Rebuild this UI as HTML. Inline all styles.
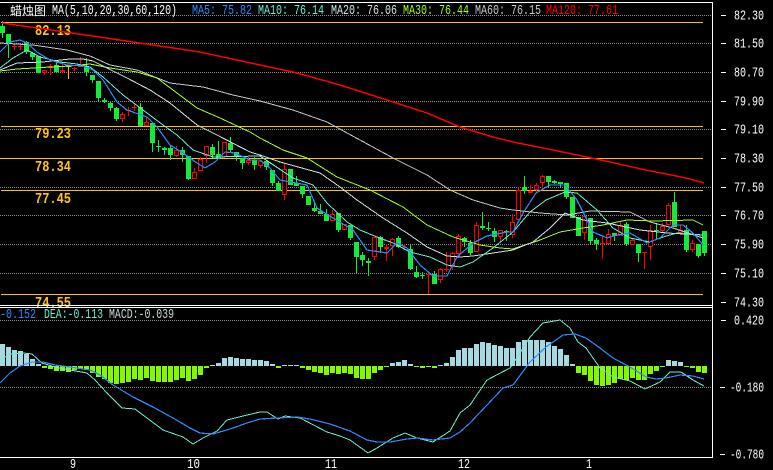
<!DOCTYPE html>
<html>
<head>
<meta charset="utf-8">
<style>
html,body{margin:0;padding:0;background:#000;width:773px;height:470px;overflow:hidden}
svg{display:block}
text{font-family:"Liberation Mono","Noto Sans CJK SC",monospace;font-size:13.5px}
.g{font-weight:bold;font-size:15px;fill:#ffc41e}
.w{fill:#fff}
</style>
</head>
<body>
<svg width="773" height="470" viewBox="0 0 773 470" xmlns="http://www.w3.org/2000/svg" shape-rendering="crispEdges">
<rect width="773" height="470" fill="#000"/>
<g stroke="#8c8c8c" stroke-dasharray="1 1" fill="none">
<path d="M0 15.5H712M0 43.5H712M0 72.5H712M0 101.5H712M0 129.5H712M0 187.5H712M0 215.5H712M0 244.5H712M0 273.5H712M0 320.5H712M0 387.5H712"/>
</g>
<path d="M1 22.5H703M1 126.5H703M0 158.5H703M1 190.5H703M1 294.5H703" stroke="#ffc000" fill="none"/>
<text class="g" x="35" y="35" textLength="36" lengthAdjust="spacingAndGlyphs">82.13</text>
<text class="g" x="35" y="138" textLength="36" lengthAdjust="spacingAndGlyphs">79.23</text>
<text class="g" x="35" y="171" textLength="36" lengthAdjust="spacingAndGlyphs">78.34</text>
<text class="g" x="35" y="203" textLength="36" lengthAdjust="spacingAndGlyphs">77.45</text>
<text class="g" x="35" y="307" textLength="36" lengthAdjust="spacingAndGlyphs">74.55</text>

<g transform="translate(.5 0)" fill="none">
<!-- green wicks -->
<path stroke="#14ea3c" d="M2 21V38M8 34V58M26 41V54M32 52V60M38 56V73M56 61V73M86 58V76M92 75V83M98 81V102M104 98V103M110 102V111M116 107V121M140 103V126M152 123V152M158 140V152M164 147V155M170 146V160M182 147V162M188 156V180M212 144V158M218 141V158M230 137V153M236 152V161M242 158V169M254 157V170M266 161V170M272 170V186M278 181V191M290 169V185M296 176V186M302 186V198M308 196V205M314 201V212M320 204V214M326 209V221M338 213V232M350 225V240M356 242V273M362 252V266M368 258V276M380 236V253M398 236V248M410 244V270M416 266V278M422 272V279M434 271V284M464 237V247M470 240V255M482 212V230M488 222V231M494 228V242M506 230V241M524 176V194M548 176V188M554 180V184M560 182V188M566 183V199M572 197V218M578 217V236M590 218V244M596 238V250M614 233V241M626 222V246M638 244V262M656 224V240M674 192V227M686 225V252M698 244V258M704 231V256"/>
<!-- green bodies -->
<path stroke="#14ea3c" stroke-width="5" d="M2 26V33M8 34V44M26 42V52M32 53V57M38 56V73M56 65V72M86 67V72M92 75V80M98 81V98M104 100V102M110 103V108M116 108V119M140 107V126M152 123V143M158 146V147M164 148V150M170 148V155M182 150V155M188 156V179M212 147V155M218 154V158M230 143V150M236 152V157M242 158V163M254 160V165M266 161V167M272 170V183M278 183V191M290 169V185M296 183V186M302 186V194M308 196V205M314 208V211M320 211V214M326 214V221M338 213V230M350 225V238M356 242V257M362 255V260M368 261V263M380 237V247M398 238V247M410 249V269M416 272V277M422 275V276M434 274V284M464 238V242M470 243V253M482 226V228M488 228V229M494 231V237M506 231V232M524 187V191M548 176V182M554 181V183M560 182V184M566 183V197M572 197V218M578 217V236M590 218V241M596 240V244M614 233V236M626 224V244M638 244V253M656 230V231M674 202V227M686 230V250M698 244V256M704 231V253"/>
<!-- red wicks -->
<path stroke="#ff0000" d="M14 44V50M20 44V50M44 70V75M50 64V75M62 63V73M74 67V71M80 57V67M122 112V122M128 107V116M134 104V111M146 117V126M176 146V157M194 168V179M200 157V171M206 146V163M224 142V158M248 157V165M260 160V168M284 163V200M332 210V221M344 224V230M374 237V260M386 244V261M392 238V256M404 244V250M428 272V294M440 268V283M446 252V272M452 252V270M458 234V256M476 222V252M500 230V242M512 214V238M518 187V220M530 185V193M536 183V193M542 175V189M584 216V240M602 235V259M608 229V244M620 222V236M632 238V245M644 252V269M650 225V260M662 223V233M668 203V225M680 225V235M692 240V252"/>
<!-- red bodies -->
<path stroke="#ff0000" stroke-width="5" d="M14 46V47M20 46V47M44 70V73M50 66V68M62 70V72M74 68V69M80 66V67M122 114V119M128 110V111M134 107V108M146 122V126M176 150V156M194 172V179M200 159V171M206 146V156M224 142V157M248 160V163M260 161V166M284 169V195M332 214V221M344 224V230M374 237V257M386 247V249M392 239V246M404 247V248M428 274V275M440 269V280M446 269V270M452 253V267M458 236V254M476 225V252M500 230V237M512 222V235M518 190V220M530 191V193M536 185V190M542 176V183M584 216V233M602 243V244M608 234V244M620 225V236M632 240V245M644 252V253M650 230V247M662 226V231M668 205V225M680 230V233M692 243V250"/>
<!-- hollow interiors -->
<path stroke="#000" stroke-width="3" d="M44 71V72M122 115V118M146 123V125M176 151V155M194 173V178M200 160V170M206 147V155M224 143V156M248 161V162M260 162V165M284 170V194M332 215V220M344 225V229M374 238V256M392 240V245M440 270V279M452 254V266M458 237V253M476 226V251M500 231V236M512 223V234M518 191V219M536 186V189M542 177V182M584 217V232M608 235V243M620 226V235M632 241V244M650 231V246M662 227V230M668 206V224M680 231V232M692 244V249"/>
<path stroke="#ffc000" d="M68 66V79"/>
<path stroke="#ffc000" stroke-width="5" d="M68 66V67"/>
</g>

<g fill="none">
<polyline stroke="#ff0000" stroke-width="1.5" points="2,23 72,33 133,42 200,52 260,65 293,72 340,85 387,100 427,113 460,127 493,137 513,142 553,150 596,159 646,170 686,178 704,183"/>
<polyline stroke="#c8c8c8" points="0,43 33,45 67,50 90,56 110,65 137,70 170,83 203,87 233,95 260,101 293,110 327,122 360,140 393,158 427,175 450,190 473,200 500,208 513,210 540,213 567,215 590,211 630,212 650,222 673,228 703,238"/>
<polyline stroke="#a0ff20" points="0,71 17,69 50,67 70,66 90,64 110,68 137,72 157,78 177,93 197,108 220,118 250,132 260,138 283,150 307,158 337,177 370,190 403,207 427,225 453,237 480,245 500,248 513,249 540,240 560,232 583,228 603,225 627,220 653,221 693,220 703,225"/>
<polyline stroke="#d0e4e4" points="0,70 17,63 43,62 70,59 83,59 93,61 107,68 127,78 150,90 170,103 197,125 217,135 250,152 260,155 280,162 320,173 340,187 357,200 383,218 407,233 427,247 447,256 460,257 473,256 493,253 513,250 533,242 550,228 565,213 583,220 607,223 640,230 667,233 703,235"/>
<polyline stroke="#66f0d8" points="0,68 13,58 27,50 40,57 60,62 77,64 90,67 103,77 123,95 143,110 163,125 177,135 193,150 213,157 260,156 293,178 313,185 327,203 347,222 360,230 377,237 393,243 410,252 430,257 447,265 460,267 473,262 493,248 513,232 530,212 546,200 565,192 577,193 597,210 613,228 630,238 650,242 663,237 677,233 703,235"/>
<polyline stroke="#2a8cff" stroke-width="1.2" points="0,52 10,42 20,40 27,43 37,52 50,60 67,65 83,66 93,70 103,80 117,102 127,110 147,117 157,127 170,145 183,153 197,163 205,168 215,162 225,152 235,153 250,160 260,160 270,168 280,180 307,185 317,208 333,218 353,230 367,250 387,253 397,243 407,248 420,265 433,276 447,276 457,257 473,243 487,236 507,232 513,232 523,213 536,193 550,185 565,185 577,200 587,220 593,232 607,238 617,235 630,233 647,243 660,238 673,225 683,225 693,233 703,245"/>
</g>

<!-- MACD histogram -->
<g transform="translate(.5 0)" fill="none" stroke-width="5">
<path stroke="#a8d8e0" d="M2 366V344M8 366V347M14 366V350M20 366V351M26 366V354M32 366V359M38 366V364M212 366V365M218 366V363M224 366V358M230 366V357M236 366V358M242 366V359M248 366V359M254 366V360M260 366V360M266 366V361M272 366V364M284 366V365M290 366V365M296 366V365M392 366V363M398 366V362M404 366V360M410 366V364M440 366V365M446 366V363M452 366V357M458 366V350M464 366V348M470 366V348M476 366V344M482 366V342M488 366V343M494 366V345M500 366V346M506 366V348M512 366V348M518 366V342M524 366V340M530 366V340M536 366V340M542 366V340M548 366V342M554 366V346M560 366V349M566 366V355M572 366V364M668 366V360M674 366V361M680 366V362"/>
<path stroke="#84f800" d="M44 366V368M50 366V369M56 366V371M62 366V371M68 366V372M74 366V370M80 366V369M86 366V370M92 366V373M98 366V377M104 366V379M110 366V383M116 366V384M122 366V383M128 366V382M134 366V379M140 366V380M146 366V378M152 366V381M158 366V382M164 366V382M170 366V382M176 366V380M182 366V378M188 366V381M194 366V379M200 366V375M206 366V368M278 366V368M302 366V368M308 366V370M314 366V372M320 366V373M326 366V375M332 366V373M338 366V374M344 366V373M350 366V374M356 366V378M362 366V379M368 366V379M374 366V373M380 366V370M386 366V367M416 366V367M422 366V368M428 366V367M434 366V368M578 366V373M584 366V375M590 366V381M596 366V385M602 366V386M608 366V385M614 366V383M620 366V379M626 366V380M632 366V378M638 366V380M644 366V380M650 366V374M656 366V371M662 366V367M686 366V367M692 366V368M698 366V372M704 366V373"/>
</g>
<g fill="none">
<polyline stroke="#66f0d0" points="0,360 10,354 23,353 32,354 42,363 55,367 70,370 87,373 95,380 107,393 122,408 135,409 147,418 163,430 183,437 193,444 203,438 217,431 227,420 243,416 260,412 267,412 278,419 285,416 300,418 327,432 340,436 350,440 368,453 377,448 393,438 405,433 417,438 433,442 450,431 460,413 470,405 487,380 510,368 520,353 530,337 543,323 560,320 570,328 578,342 586,348 600,368 613,377 630,381 645,389 660,382 670,372 681,372 693,380 704,386"/>
<polyline stroke="#2a8cff" stroke-width="1.2" points="0,383 10,373 20,366 32,362 43,362 55,365 70,367 90,370 100,375 113,385 133,397 153,407 173,418 190,428 200,433 213,434 230,429 247,423 260,419 277,418 297,417 310,419 330,424 350,431 367,440 377,442 390,442 407,439 417,438 433,440 450,438 460,432 470,423 487,405 503,388 513,385 530,362 546,347 563,335 575,334 586,338 600,348 613,358 630,367 646,377 656,379 666,378 680,375 693,376 704,379"/>
</g>

<!-- frame -->
<path d="M0 2.5H713M0 305.5H713M0 307.5H713M0 457.5H713M712.5 2V458" stroke="#fff" fill="none"/>

<!-- header -->
<text x="10" y="15" fill="#fff" style="font-family:'WenQuanYi Zen Hei','Noto Sans CJK SC',sans-serif;font-size:12px">蜡烛图</text>
<text x="52" y="14" fill="#fff" textLength="125" lengthAdjust="spacingAndGlyphs">MA(5,10,20,30,60,120)</text>
<text x="192" y="14" fill="#2a8cff" textLength="60" lengthAdjust="spacingAndGlyphs">MA5: 75.82</text>
<text x="258" y="14" fill="#66f0d8" textLength="66" lengthAdjust="spacingAndGlyphs">MA10: 76.14</text>
<text x="331" y="14" fill="#d0e4e4" textLength="66" lengthAdjust="spacingAndGlyphs">MA20: 76.06</text>
<text x="403" y="14" fill="#a0ff20" textLength="66" lengthAdjust="spacingAndGlyphs">MA30: 76.44</text>
<text x="475" y="14" fill="#c8c8c8" textLength="66" lengthAdjust="spacingAndGlyphs">MA60: 76.15</text>
<text x="546" y="14" fill="#ff0000" textLength="72" lengthAdjust="spacingAndGlyphs">MA120: 77.61</text>

<text x="0" y="318" fill="#2a8cff" textLength="36" lengthAdjust="spacingAndGlyphs">-0.152</text>
<text x="44" y="318" fill="#66f0d0" textLength="59" lengthAdjust="spacingAndGlyphs">DEA:-0.113</text>
<text x="109" y="318" fill="#c8d8d8" textLength="65" lengthAdjust="spacingAndGlyphs">MACD:-0.039</text>

<!-- right axis -->
<path d="M721 15.5H726M721 43.5H726M721 72.5H726M721 101.5H726M721 129.5H726M721 158.5H726M721 187.5H726M721 215.5H726M721 244.5H726M721 273.5H726M721 302.5H726M721 320.5H726M720 387.5H725M720 454.5H725" stroke="#fff" fill="none"/>
<g class="w">
<text class="w" x="734" y="19.5" textLength="30" lengthAdjust="spacingAndGlyphs">82.30</text>
<text class="w" x="734" y="47.5" textLength="30" lengthAdjust="spacingAndGlyphs">81.50</text>
<text class="w" x="734" y="76.5" textLength="30" lengthAdjust="spacingAndGlyphs">80.70</text>
<text class="w" x="734" y="105.5" textLength="30" lengthAdjust="spacingAndGlyphs">79.90</text>
<text class="w" x="734" y="133.5" textLength="30" lengthAdjust="spacingAndGlyphs">79.10</text>
<text class="w" x="734" y="162.5" textLength="30" lengthAdjust="spacingAndGlyphs">78.30</text>
<text class="w" x="734" y="191.5" textLength="30" lengthAdjust="spacingAndGlyphs">77.50</text>
<text class="w" x="734" y="219.5" textLength="30" lengthAdjust="spacingAndGlyphs">76.70</text>
<text class="w" x="734" y="248.5" textLength="30" lengthAdjust="spacingAndGlyphs">75.90</text>
<text class="w" x="734" y="277.5" textLength="30" lengthAdjust="spacingAndGlyphs">75.10</text>
<text class="w" x="734" y="306.5" textLength="30" lengthAdjust="spacingAndGlyphs">74.30</text>
<text class="w" x="734" y="324.5" textLength="30" lengthAdjust="spacingAndGlyphs">0.420</text>
<text class="w" x="730" y="391.5" textLength="34" lengthAdjust="spacingAndGlyphs">-0.180</text>
<text class="w" x="730" y="458.5" textLength="34" lengthAdjust="spacingAndGlyphs">-0.780</text>
</g>

<!-- x axis -->
<text class="w" x="70" y="468" textLength="6" lengthAdjust="spacingAndGlyphs">9</text>
<text class="w" x="187" y="468" textLength="13" lengthAdjust="spacingAndGlyphs">10</text>
<text class="w" x="325" y="468" textLength="12" lengthAdjust="spacingAndGlyphs">11</text>
<text class="w" x="458" y="468" textLength="12" lengthAdjust="spacingAndGlyphs">12</text>
<text class="w" x="586" y="468" textLength="6" lengthAdjust="spacingAndGlyphs">1</text>
</svg>
</body>
</html>
